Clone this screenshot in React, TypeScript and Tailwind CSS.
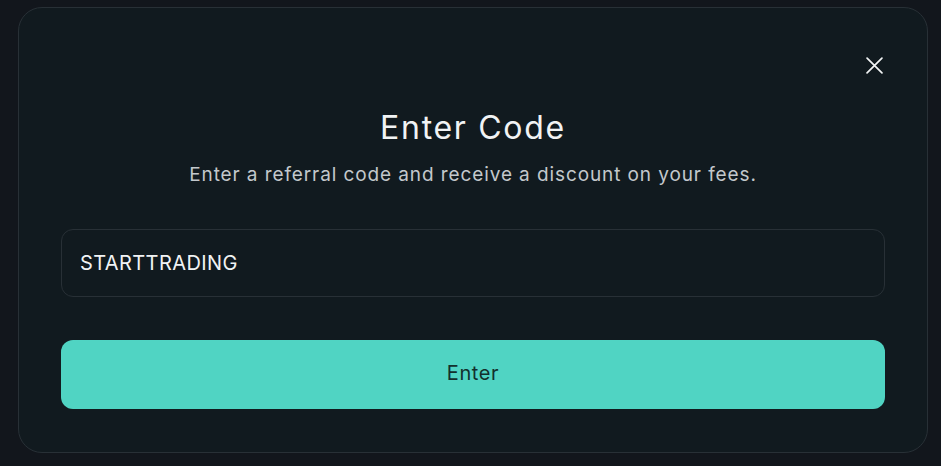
import React, { useState } from 'react';

const App: React.FC = () => {
  const [code, setCode] = useState('STARTTRADING');

  return (
    <div
      className="w-[941px] h-[466px] overflow-hidden bg-[#12161c] pt-[7px] pl-[18px]"
      style={{ fontFamily: 'Inter, "Noto Sans", sans-serif' }}
    >
      <div className="relative w-[910px] h-[446px] rounded-[24px] border border-[#283036] bg-[#111a1f] px-[42px] pt-[100px] pb-[42px] flex flex-col">
        <button className="absolute top-[49px] right-[45px] w-[16px] h-[16px] text-[#f2f4f5]" aria-label="Close">
          <svg viewBox="0 0 16 16" className="w-[17px] h-[17px]" fill="none" stroke="currentColor" strokeWidth="1.6" strokeLinecap="round">
            <path d="M1 1L15 15M15 1L1 15" />
          </svg>
        </button>

        <h1 className="text-center text-[32px] leading-[40px] tracking-[1.7px] font-normal text-[#f1f3f4]">Enter Code</h1>
        <p className="mt-[13px] text-center text-[19px] leading-[28px] tracking-[0.9px] text-[#c3c8cc]">
          Enter a referral code and receive a discount on your fees.
        </p>

        <input
          value={code}
          onChange={(e) => setCode(e.target.value)}
          className="mt-[40px] h-[68px] w-full rounded-[12px] border border-[#283036] bg-transparent px-[18px] text-[20px] tracking-[0.4px] text-[#f1f3f4] outline-none"
        />

        <button className="mt-[43px] h-[69px] w-full rounded-[12px] bg-[#50d4c3] pb-[3px] text-[20px] tracking-[0.6px] text-[#13302d]">
          Enter
        </button>
      </div>
    </div>
  );
};

export default App;
